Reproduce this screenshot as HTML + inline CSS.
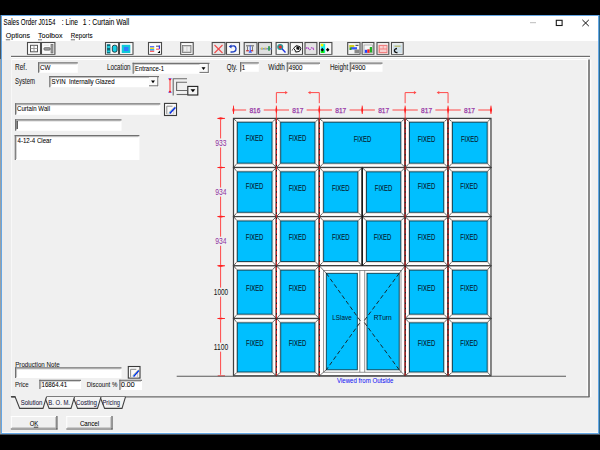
<!DOCTYPE html>
<html><head><meta charset="utf-8"><style>
html,body{margin:0;padding:0;width:600px;height:450px;overflow:hidden;background:#000}
svg{display:block}
text{font-family:"Liberation Sans", sans-serif}
</style></head><body>
<svg width="600" height="450" viewBox="0 0 600 450">
<rect x="0" y="0" width="600" height="450" fill="#000" />
<rect x="0" y="15" width="1" height="419" fill="#9aa0a4" />
<rect x="0" y="15" width="1" height="44" fill="#4a565e" />
<rect x="1" y="15" width="598" height="419" fill="#64a6e4" />
<rect x="0" y="434" width="600" height="1" fill="#4c5660" />
<rect x="599" y="15" width="1" height="419" fill="#2d6b8f" />
<rect x="2" y="16" width="596" height="417" fill="#f0f0f0" />
<rect x="2" y="16" width="596" height="25" fill="#fff" />
<rect x="2" y="432" width="596" height="1" fill="#fbfbf8" />
<text x="3.5" y="24.5" font-size="8.2" fill="#000" textLength="52" lengthAdjust="spacingAndGlyphs" stroke="#000" stroke-width="0.06" >Sales Order J0154</text>
<text x="61.8" y="24.5" font-size="8.2" fill="#000" textLength="16.2" lengthAdjust="spacingAndGlyphs" stroke="#000" stroke-width="0.06" >: Line</text>
<text x="82.8" y="24.5" font-size="8.2" fill="#000" textLength="46.6" lengthAdjust="spacingAndGlyphs" stroke="#000" stroke-width="0.06" >1 : Curtain Wall</text>
<line x1="530" y1="22.7" x2="536" y2="22.7" stroke="#b4b4b4" stroke-width="0.9" />
<rect x="556.3" y="20.3" width="5.8" height="5.2" fill="none" stroke="#1a1a1a" stroke-width="1.1" />
<line x1="582.4" y1="19.9" x2="588.8" y2="26.1" stroke="#111" stroke-width="1.0" />
<line x1="588.8" y1="19.9" x2="582.4" y2="26.1" stroke="#111" stroke-width="1.0" />
<text x="5.8" y="38.3" font-size="7.5" fill="#000" textLength="24.2" lengthAdjust="spacingAndGlyphs" stroke="#000" stroke-width="0.06" >Options</text>
<text x="38" y="38.3" font-size="7.5" fill="#000" textLength="24.5" lengthAdjust="spacingAndGlyphs" stroke="#000" stroke-width="0.06" >Toolbox</text>
<text x="70.8" y="38.3" font-size="7.5" fill="#000" textLength="21.7" lengthAdjust="spacingAndGlyphs" stroke="#000" stroke-width="0.06" >Reports</text>
<line x1="5.8" y1="39.8" x2="10.2" y2="39.8" stroke="#333" stroke-width="0.7" />
<line x1="38" y1="39.8" x2="42" y2="39.8" stroke="#333" stroke-width="0.7" />
<line x1="70.8" y1="39.8" x2="75" y2="39.8" stroke="#333" stroke-width="0.7" />
<rect x="27.5" y="42.5" width="13" height="12" fill="#fbfbfb" stroke="#4a4a4a" stroke-width="1.1" />
<rect x="41.5" y="42.5" width="13.399999999999999" height="12" fill="#fbfbfb" stroke="#4a4a4a" stroke-width="1.1" />
<rect x="105.5" y="42.5" width="13" height="12" fill="#fbfbfb" stroke="#4a4a4a" stroke-width="1.1" />
<rect x="119.5" y="42.5" width="13.5" height="12" fill="#fbfbfb" stroke="#4a4a4a" stroke-width="1.1" />
<rect x="148.5" y="42.5" width="13" height="12" fill="#fbfbfb" stroke="#4a4a4a" stroke-width="1.1" />
<rect x="180.7" y="42.5" width="12.5" height="12" fill="#fbfbfb" stroke="#4a4a4a" stroke-width="1.1" />
<rect x="212.2" y="42.5" width="12.800000000000011" height="12" fill="#e8e8e8" stroke="#4a4a4a" stroke-width="1.1" />
<rect x="226.5" y="42.5" width="13" height="12" fill="#f8f8f8" stroke="#4a4a4a" stroke-width="1.1" />
<rect x="244.2" y="42.5" width="12.800000000000011" height="12" fill="#e8e8e8" stroke="#4a4a4a" stroke-width="1.1" />
<rect x="258.5" y="42.5" width="13" height="12" fill="#e0e0e0" stroke="#4a4a4a" stroke-width="1.1" />
<rect x="276.1" y="42.5" width="12.199999999999989" height="12" fill="#f8f8f8" stroke="#4a4a4a" stroke-width="1.1" />
<rect x="290.2" y="42.5" width="12.300000000000011" height="12" fill="#f8f8f8" stroke="#4a4a4a" stroke-width="1.1" />
<rect x="305.0" y="42.5" width="11.899999999999977" height="12" fill="#e4e4e4" stroke="#4a4a4a" stroke-width="1.1" />
<rect x="319.5" y="42.5" width="12.399999999999977" height="12" fill="#f8f8f8" stroke="#4a4a4a" stroke-width="1.1" />
<rect x="347.7" y="42.5" width="12.300000000000011" height="12" fill="#f4f4f4" stroke="#4a4a4a" stroke-width="1.1" />
<rect x="362.1" y="42.5" width="11.799999999999955" height="12" fill="#f4f4f4" stroke="#4a4a4a" stroke-width="1.1" />
<rect x="377.0" y="42.5" width="11.800000000000011" height="12" fill="#f4f4f4" stroke="#4a4a4a" stroke-width="1.1" />
<rect x="391.5" y="42.5" width="11.699999999999989" height="12" fill="#f4f4f4" stroke="#4a4a4a" stroke-width="1.1" />
<rect x="30.5" y="45.3" width="7" height="6.5" fill="none" stroke="#555" stroke-width="1" />
<line x1="34" y1="45.3" x2="34" y2="51.8" stroke="#888" stroke-width="0.8" />
<line x1="30.5" y1="48.5" x2="37.5" y2="48.5" stroke="#888" stroke-width="0.8" />
<rect x="43.8" y="47.6" width="6.5" height="2.6" fill="#9a9a9a" stroke="#555" stroke-width="0.6" rx="1.2"/>
<rect x="51" y="44.5" width="2" height="8.5" fill="#a8a8a8" stroke="#555" stroke-width="0.6" />
<line x1="43.5" y1="45.2" x2="49" y2="45.2" stroke="#ccc" stroke-width="0.6" />
<rect x="106.8" y="44.2" width="3.6" height="9.3" fill="#0a6a7a" />
<rect x="107.3" y="46" width="2.6" height="2" fill="#20d0e0" />
<rect x="107.3" y="50.5" width="2.6" height="1.6" fill="#20d0e0" />
<rect x="112.3" y="45.2" width="4.8" height="7" fill="#18d0e8" stroke="#000" stroke-width="0.7" rx="2"/>
<rect x="121.7" y="44.8" width="8.6" height="8.2" fill="#10c8d8" />
<rect x="124" y="47" width="4.5" height="4" fill="#2e7cff" />
<rect x="150" y="46.2" width="4.2" height="1.3" fill="#3050ff" />
<rect x="150" y="47.6" width="4.2" height="1.4" fill="#f0e020" />
<rect x="150" y="49.1" width="4.2" height="1.5" fill="#20a0ff" />
<rect x="150" y="50.7" width="4.2" height="1.2" fill="#ff5050" />
<rect x="156" y="45.5" width="3.8" height="1.5" fill="#888" />
<rect x="158.8" y="45.5" width="1.2" height="3.5" fill="#3030ff" />
<rect x="156" y="48.6" width="3.5" height="1.2" fill="#ff6060" />
<polygon points="157.5,53 160,50.5 160,53" fill="#000" />
<rect x="182.5" y="45.5" width="8.5" height="7" fill="#c8c8c8" stroke="#777" stroke-width="0.8" />
<rect x="184" y="46.8" width="2.5" height="4.5" fill="#eee" />
<rect x="187.4" y="46.8" width="2.5" height="4.5" fill="#eee" />
<line x1="214.5" y1="45" x2="222.5" y2="53" stroke="#f04848" stroke-width="1.1" />
<line x1="222.5" y1="45" x2="214.5" y2="53" stroke="#f04848" stroke-width="1.1" />
<path d="M230.2,46.5 Q235.5,44.5 236,48.5 Q236.2,52.5 230.5,52" fill="none" stroke="#2040c0" stroke-width="1.4"/>
<polygon points="228.7,46.6 231.5,44.6 231.5,48.4" fill="#2040c0" />
<rect x="246" y="45.2" width="8" height="1.2" fill="#777" />
<rect x="247" y="46.4" width="1" height="4" fill="#777" />
<rect x="252" y="46.4" width="1" height="4" fill="#777" />
<rect x="246.2" y="50" width="2.6" height="1.4" fill="#c04040" />
<rect x="250.6" y="50" width="2.6" height="1.4" fill="#c04040" />
<polygon points="248.5,52.8 250.3,49.5 252,52.8" fill="#4060ff" />
<rect x="249.7" y="45.5" width="1" height="5" fill="#4060ff" />
<rect x="260.5" y="48" width="11" height="1.5" fill="#7090e0" />
<rect x="261" y="47.6" width="2" height="2" fill="#d0c060" />
<rect x="264.5" y="47.6" width="2" height="2" fill="#d0c060" />
<rect x="268" y="46.2" width="2" height="4.5" fill="#40a060" />
<circle cx="280.2" cy="47" r="2.4" fill="#e03030" stroke="#20a0a0" stroke-width="1.3"/>
<line x1="282" y1="48.8" x2="285.5" y2="52.5" stroke="#2030e0" stroke-width="1.4" />
<path d="M293.5,48.2 l2.8,-2.6 l3.6,1 l1,2.2 l-1.5,2.6 l-3,0.6 z" fill="none" stroke="#111" stroke-width="1"/>
<path d="M296.5,46 l3.2,1.4 l-0.6,2.5 l-2.8,-0.6 z" fill="#111"/>
<path d="M295,51 l1.2,1.8 M292.6,49.2 l-0.4,1.4" fill="none" stroke="#333" stroke-width="0.8"/>
<path d="M306,48.8 q1.2,-2.4 2.4,-0.4 q1,2.2 2.4,0.4 q1.2,-2.4 2.4,-0.2 q0.6,1.5 1.4,1" fill="none" stroke="#b040c8" stroke-width="1.2" stroke-dasharray="1.6,0.7"/>
<rect x="320.8" y="43.8" width="4.4" height="9" fill="#10f0f0" />
<rect x="320.8" y="43.8" width="2.6" height="2.6" fill="#f0f000" />
<rect x="320.8" y="50.2" width="3.6" height="2.8" fill="#10f010" />
<polygon points="322.3,47.8 324,49.8 322.3,51.8 320.6,49.8" fill="#000" />
<polygon points="327.7,47.8 329.5,49.8 327.7,51.8 325.9,49.8" fill="#000" />
<rect x="349.3" y="45" width="5" height="2.5" fill="#d0d020" />
<rect x="350.5" y="47.2" width="6.5" height="2.3" fill="#3050ff" />
<rect x="349.5" y="47.5" width="2" height="2.5" fill="#20a020" />
<rect x="354.5" y="49.5" width="4.5" height="3.8" fill="#888" />
<rect x="355.5" y="44.8" width="3" height="1.2" fill="#555" />
<rect x="364" y="45" width="8.5" height="8" fill="#f8f8f8" stroke="#999" stroke-width="0.7" />
<rect x="364.8" y="49.8" width="2.6" height="3" fill="#2040ff" />
<rect x="367.3" y="49.3" width="2.4" height="3.5" fill="#ff2020" />
<rect x="369.8" y="47" width="2.2" height="5.5" fill="#20b020" />
<rect x="378.5" y="44.8" width="9" height="8.5" fill="#f08080" />
<rect x="379.8" y="46" width="3" height="2.5" fill="#f8d0d0" />
<rect x="383.5" y="46" width="3" height="2.5" fill="#f8d0d0" />
<rect x="380" y="49.5" width="6.5" height="2.5" fill="#f8d0d0" />
<rect x="393" y="44.5" width="9" height="8.5" fill="#cfe0ea" />
<rect x="394.5" y="45.5" width="6" height="1.5" fill="#c0c080" />
<path d="M397,48.5 q-3,0.5 -2.5,2.5 q0.5,2 3,1.5" fill="none" stroke="#111" stroke-width="1.3"/>
<line x1="11" y1="55.3" x2="590" y2="55.3" stroke="#ffffff" stroke-width="1" />
<line x1="11" y1="56.3" x2="590" y2="56.3" stroke="#6e6e6e" stroke-width="1.2" />
<line x1="11" y1="57.5" x2="590" y2="57.5" stroke="#ffffff" stroke-width="1" />
<line x1="11.5" y1="59.5" x2="589" y2="59.5" stroke="#ffffff" stroke-width="1" />
<line x1="11.5" y1="59.5" x2="11.5" y2="396.5" stroke="#f8f8f8" stroke-width="1" />
<line x1="587.3" y1="59.5" x2="587.3" y2="397" stroke="#ffffff" stroke-width="1" />
<line x1="590.8" y1="59.5" x2="590.8" y2="397" stroke="#ffffff" stroke-width="1" />
<rect x="2" y="60" width="9" height="372" fill="#ececec" />
<line x1="589" y1="59.5" x2="589" y2="397" stroke="#505050" stroke-width="1.3" />
<line x1="11.5" y1="396.8" x2="589.5" y2="396.8" stroke="#6a6a6a" stroke-width="1.2" />
<text x="15" y="69.7" font-size="8.2" fill="#1a1a1a" textLength="12" lengthAdjust="spacingAndGlyphs" stroke="#1a1a1a" stroke-width="0.06" >Ref.</text>
<rect x="38" y="62.3" width="39.8" height="10.5" fill="#ffffff" />
<line x1="38" y1="62.9" x2="77.8" y2="62.9" stroke="#707070" stroke-width="1.2" />
<line x1="38.6" y1="62.3" x2="38.6" y2="72.8" stroke="#707070" stroke-width="1.2" />
<line x1="39.5" y1="63.9" x2="76.8" y2="63.9" stroke="#a0a0a0" stroke-width="0.6" />
<line x1="39.6" y1="63.8" x2="39.6" y2="71.8" stroke="#a0a0a0" stroke-width="0.6" />
<text x="39.9" y="70.2" font-size="7.5" fill="#000" textLength="10.5" lengthAdjust="spacingAndGlyphs" stroke="#000" stroke-width="0.06" >CW</text>
<text x="107" y="70" font-size="8.2" fill="#1a1a1a" textLength="23.6" lengthAdjust="spacingAndGlyphs" stroke="#1a1a1a" stroke-width="0.06" >Location</text>
<rect x="132.6" y="62.8" width="76.9" height="11.0" fill="#ffffff" />
<line x1="132.6" y1="63.4" x2="209.5" y2="63.4" stroke="#707070" stroke-width="1.2" />
<line x1="133.2" y1="62.8" x2="133.2" y2="73.8" stroke="#707070" stroke-width="1.2" />
<line x1="134.1" y1="64.39999999999999" x2="208.5" y2="64.39999999999999" stroke="#a0a0a0" stroke-width="0.6" />
<line x1="134.2" y1="64.3" x2="134.2" y2="72.8" stroke="#a0a0a0" stroke-width="0.6" />
<rect x="199.5" y="64.0" width="9" height="8.6" fill="#fafafa" />
<line x1="208.3" y1="63.8" x2="208.3" y2="72.8" stroke="#707070" stroke-width="1" />
<line x1="199.5" y1="72.39999999999999" x2="208.5" y2="72.39999999999999" stroke="#707070" stroke-width="1" />
<polygon points="201.5,67.3 205.5,67.3 203.5,69.89999999999999" fill="#000" />
<text x="135" y="70.6" font-size="7.5" fill="#000" textLength="29" lengthAdjust="spacingAndGlyphs" stroke="#000" stroke-width="0.06" >Entrance-1</text>
<text x="15" y="83.7" font-size="8.2" fill="#1a1a1a" textLength="20" lengthAdjust="spacingAndGlyphs" stroke="#1a1a1a" stroke-width="0.06" >System</text>
<rect x="49.2" y="76" width="109.8" height="11.200000000000003" fill="#ffffff" />
<line x1="49.2" y1="76.6" x2="159" y2="76.6" stroke="#707070" stroke-width="1.2" />
<line x1="49.800000000000004" y1="76" x2="49.800000000000004" y2="87.2" stroke="#707070" stroke-width="1.2" />
<line x1="50.7" y1="77.6" x2="158" y2="77.6" stroke="#a0a0a0" stroke-width="0.6" />
<line x1="50.800000000000004" y1="77.5" x2="50.800000000000004" y2="86.2" stroke="#a0a0a0" stroke-width="0.6" />
<rect x="149" y="77.2" width="9" height="8.800000000000002" fill="#fafafa" />
<line x1="157.8" y1="77" x2="157.8" y2="86.2" stroke="#707070" stroke-width="1" />
<line x1="149" y1="85.8" x2="158" y2="85.8" stroke="#707070" stroke-width="1" />
<polygon points="151.0,80.6 155.0,80.6 153.0,83.19999999999999" fill="#000" />
<text x="51.5" y="84" font-size="7.5" fill="#000" textLength="63" lengthAdjust="spacingAndGlyphs" stroke="#000" stroke-width="0.06" >SYIN  Internally Glazed</text>
<text x="226.7" y="69.7" font-size="8.2" fill="#1a1a1a" textLength="10.6" lengthAdjust="spacingAndGlyphs" stroke="#1a1a1a" stroke-width="0.06" >Qty.</text>
<rect x="240" y="62.3" width="18.80000000000001" height="9.5" fill="#ffffff" />
<line x1="240" y1="62.9" x2="258.8" y2="62.9" stroke="#707070" stroke-width="1.2" />
<line x1="240.6" y1="62.3" x2="240.6" y2="71.8" stroke="#707070" stroke-width="1.2" />
<line x1="241.5" y1="63.9" x2="257.8" y2="63.9" stroke="#a0a0a0" stroke-width="0.6" />
<line x1="241.6" y1="63.8" x2="241.6" y2="70.8" stroke="#a0a0a0" stroke-width="0.6" />
<text x="241.8" y="70" font-size="7.5" fill="#000" textLength="3.4" lengthAdjust="spacingAndGlyphs" stroke="#000" stroke-width="0.06" >1</text>
<text x="268.3" y="69.7" font-size="8.2" fill="#1a1a1a" textLength="16.7" lengthAdjust="spacingAndGlyphs" stroke="#1a1a1a" stroke-width="0.06" >Width</text>
<rect x="286.7" y="62.5" width="33.30000000000001" height="9.299999999999997" fill="#ffffff" />
<line x1="286.7" y1="63.1" x2="320" y2="63.1" stroke="#707070" stroke-width="1.2" />
<line x1="287.3" y1="62.5" x2="287.3" y2="71.8" stroke="#707070" stroke-width="1.2" />
<line x1="288.2" y1="64.1" x2="319" y2="64.1" stroke="#a0a0a0" stroke-width="0.6" />
<line x1="288.3" y1="64.0" x2="288.3" y2="70.8" stroke="#a0a0a0" stroke-width="0.6" />
<text x="288.7" y="70" font-size="7.5" fill="#000" textLength="13.8" lengthAdjust="spacingAndGlyphs" stroke="#000" stroke-width="0.06" >4900</text>
<text x="330" y="69.7" font-size="8.2" fill="#1a1a1a" textLength="18.3" lengthAdjust="spacingAndGlyphs" stroke="#1a1a1a" stroke-width="0.06" >Height</text>
<rect x="349.7" y="62.5" width="32.80000000000001" height="9.299999999999997" fill="#ffffff" />
<line x1="349.7" y1="63.1" x2="382.5" y2="63.1" stroke="#707070" stroke-width="1.2" />
<line x1="350.3" y1="62.5" x2="350.3" y2="71.8" stroke="#707070" stroke-width="1.2" />
<line x1="351.2" y1="64.1" x2="381.5" y2="64.1" stroke="#a0a0a0" stroke-width="0.6" />
<line x1="351.3" y1="64.0" x2="351.3" y2="70.8" stroke="#a0a0a0" stroke-width="0.6" />
<text x="351.5" y="70" font-size="7.5" fill="#000" textLength="14" lengthAdjust="spacingAndGlyphs" stroke="#000" stroke-width="0.06" >4900</text>
<line x1="170" y1="79" x2="170" y2="92" stroke="#ff5050" stroke-width="1.2" />
<line x1="168.3" y1="78.8" x2="171.7" y2="78.8" stroke="#4040ff" stroke-width="0.9" />
<line x1="168.3" y1="92.2" x2="171.7" y2="92.2" stroke="#4040ff" stroke-width="0.9" />
<rect x="169.2" y="78.6" width="1.6" height="1.6" fill="#ff0000" />
<rect x="169.2" y="90.9" width="1.6" height="1.6" fill="#ff0000" />
<polyline points="187,78.8 173.2,78.8 173.2,95.5" fill="none" stroke="#6a6a6a" stroke-width="1.1" />
<polyline points="187,82.2 176.6,82.2 176.6,90.5 187,90.5" fill="none" stroke="#6a6a6a" stroke-width="1.1" />
<line x1="176.6" y1="94.5" x2="187.5" y2="94.5" stroke="#6a6a6a" stroke-width="1.1" />
<rect x="187.8" y="86.4" width="10" height="8.6" fill="#f4f4f4" stroke="#222" stroke-width="1.1" />
<polygon points="190.5,89.2 195.3,89.2 192.9,92.2" fill="#000" />
<rect x="15" y="103.3" width="145.3" height="11.5" fill="#ffffff" />
<line x1="15" y1="103.89999999999999" x2="160.3" y2="103.89999999999999" stroke="#707070" stroke-width="1.2" />
<line x1="15.6" y1="103.3" x2="15.6" y2="114.8" stroke="#707070" stroke-width="1.2" />
<line x1="16.5" y1="104.89999999999999" x2="159.3" y2="104.89999999999999" stroke="#a0a0a0" stroke-width="0.6" />
<line x1="16.6" y1="104.8" x2="16.6" y2="113.8" stroke="#a0a0a0" stroke-width="0.6" />
<text x="17" y="111.3" font-size="7.5" fill="#000" textLength="33" lengthAdjust="spacingAndGlyphs" stroke="#000" stroke-width="0.06" >Curtain Wall</text>
<rect x="164.5" y="103.4" width="12" height="12.099999999999994" fill="#fafafa" stroke="#3a3a3a" stroke-width="1.1" />
<polyline points="166.8,114.10000000000001 166.8,106.2 172.5,106.2" fill="none" stroke="#8c8c8c" stroke-width="1" />
<line x1="173.8" y1="108.9" x2="173.8" y2="114.10000000000001" stroke="#b8b8b8" stroke-width="0.8" />
<line x1="166.8" y1="114.10000000000001" x2="173.8" y2="114.10000000000001" stroke="#c8c8c8" stroke-width="0.8" />
<line x1="168.8" y1="112.5" x2="175" y2="106.5" stroke="#c08070" stroke-width="0.6" />
<line x1="169.4" y1="113.10000000000001" x2="175.2" y2="107.10000000000001" stroke="#10e0f0" stroke-width="1.0" />
<line x1="169.8" y1="113.5" x2="175.4" y2="107.5" stroke="#1020e0" stroke-width="1.3" />
<rect x="15" y="119.3" width="106.5" height="11.500000000000014" fill="#ffffff" />
<line x1="15" y1="119.89999999999999" x2="121.5" y2="119.89999999999999" stroke="#707070" stroke-width="1.2" />
<line x1="15.6" y1="119.3" x2="15.6" y2="130.8" stroke="#707070" stroke-width="1.2" />
<line x1="16.5" y1="120.89999999999999" x2="120.5" y2="120.89999999999999" stroke="#a0a0a0" stroke-width="0.6" />
<line x1="16.6" y1="120.8" x2="16.6" y2="129.8" stroke="#a0a0a0" stroke-width="0.6" />
<line x1="17.2" y1="121" x2="17.2" y2="129" stroke="#000" stroke-width="0.9" />
<rect x="14.7" y="135.1" width="124.7" height="24.900000000000006" fill="#ffffff" />
<line x1="14.7" y1="135.7" x2="139.4" y2="135.7" stroke="#707070" stroke-width="1.2" />
<line x1="15.299999999999999" y1="135.1" x2="15.299999999999999" y2="160" stroke="#707070" stroke-width="1.2" />
<line x1="16.2" y1="136.7" x2="138.4" y2="136.7" stroke="#a0a0a0" stroke-width="0.6" />
<line x1="16.3" y1="136.6" x2="16.3" y2="159" stroke="#a0a0a0" stroke-width="0.6" />
<text x="17.5" y="142.8" font-size="7.5" fill="#000" textLength="34" lengthAdjust="spacingAndGlyphs" stroke="#000" stroke-width="0.06" >4-12-4 Clear</text>
<text x="15.2" y="366.7" font-size="7.5" fill="#1a1a1a" textLength="44.4" lengthAdjust="spacingAndGlyphs" stroke="#1a1a1a" stroke-width="0.06" >Production Note</text>
<rect x="15" y="367.3" width="106.5" height="10.699999999999989" fill="#ffffff" />
<line x1="15" y1="367.90000000000003" x2="121.5" y2="367.90000000000003" stroke="#707070" stroke-width="1.2" />
<line x1="15.6" y1="367.3" x2="15.6" y2="378" stroke="#707070" stroke-width="1.2" />
<line x1="16.5" y1="368.90000000000003" x2="120.5" y2="368.90000000000003" stroke="#a0a0a0" stroke-width="0.6" />
<line x1="16.6" y1="368.8" x2="16.6" y2="377" stroke="#a0a0a0" stroke-width="0.6" />
<rect x="128.3" y="366.5" width="11.700000000000003" height="11.600000000000023" fill="#fafafa" stroke="#3a3a3a" stroke-width="1.1" />
<polyline points="130.6,377.2 130.6,369.3 136.3,369.3" fill="none" stroke="#8c8c8c" stroke-width="1" />
<line x1="137.6" y1="372" x2="137.6" y2="377.2" stroke="#b8b8b8" stroke-width="0.8" />
<line x1="130.6" y1="377.2" x2="137.6" y2="377.2" stroke="#c8c8c8" stroke-width="0.8" />
<line x1="132.6" y1="375.6" x2="138.5" y2="369.6" stroke="#c08070" stroke-width="0.6" />
<line x1="133.2" y1="376.2" x2="138.7" y2="370.2" stroke="#10e0f0" stroke-width="1.0" />
<line x1="133.6" y1="376.6" x2="138.9" y2="370.6" stroke="#1020e0" stroke-width="1.3" />
<text x="15" y="386.5" font-size="7.5" fill="#1a1a1a" textLength="13.7" lengthAdjust="spacingAndGlyphs" stroke="#1a1a1a" stroke-width="0.06" >Price</text>
<rect x="39.3" y="379.7" width="41.7" height="9.300000000000011" fill="#ffffff" />
<line x1="39.3" y1="380.3" x2="81" y2="380.3" stroke="#707070" stroke-width="1.2" />
<line x1="39.9" y1="379.7" x2="39.9" y2="389" stroke="#707070" stroke-width="1.2" />
<line x1="40.8" y1="381.3" x2="80" y2="381.3" stroke="#a0a0a0" stroke-width="0.6" />
<line x1="40.9" y1="381.2" x2="40.9" y2="388" stroke="#a0a0a0" stroke-width="0.6" />
<text x="41.5" y="386.6" font-size="7.5" fill="#000" textLength="25.6" lengthAdjust="spacingAndGlyphs" stroke="#000" stroke-width="0.06" >16864.41</text>
<text x="86.7" y="386.7" font-size="7.5" fill="#1a1a1a" textLength="30.6" lengthAdjust="spacingAndGlyphs" stroke="#1a1a1a" stroke-width="0.06" >Discount %</text>
<rect x="119.3" y="379.7" width="22.700000000000003" height="10.300000000000011" fill="#ffffff" />
<line x1="119.3" y1="380.3" x2="142" y2="380.3" stroke="#707070" stroke-width="1.2" />
<line x1="119.89999999999999" y1="379.7" x2="119.89999999999999" y2="390" stroke="#707070" stroke-width="1.2" />
<line x1="120.8" y1="381.3" x2="141" y2="381.3" stroke="#a0a0a0" stroke-width="0.6" />
<line x1="120.89999999999999" y1="381.2" x2="120.89999999999999" y2="389" stroke="#a0a0a0" stroke-width="0.6" />
<text x="121" y="387" font-size="7.5" fill="#000" textLength="13.7" lengthAdjust="spacingAndGlyphs" stroke="#000" stroke-width="0.06" >0.00</text>
<line x1="11" y1="396.8" x2="125.5" y2="396.8" stroke="#404040" stroke-width="1.1" />
<polygon points="100,396.8 104.6,408.4 122.0,408.4 125.5,396.8" fill="#f4f4f4" />
<polyline points="100,396.8 104.6,408.4 122.0,408.4 125.5,396.8" fill="none" stroke="#404040" stroke-width="1.1" />
<text x="102.5" y="405.4" font-size="7.5" fill="#202040" textLength="17.5" lengthAdjust="spacingAndGlyphs" stroke="#202040" stroke-width="0.06" >Pricing</text>
<polygon points="73,396.8 77.6,408.4 97.5,408.4 101,396.8" fill="#f4f4f4" />
<polyline points="73,396.8 77.6,408.4 97.5,408.4 101,396.8" fill="none" stroke="#404040" stroke-width="1.1" />
<text x="76" y="405.4" font-size="7.5" fill="#202040" textLength="21" lengthAdjust="spacingAndGlyphs" stroke="#202040" stroke-width="0.06" >Costing</text>
<polygon points="44.5,396.8 49.1,408.4 71.0,408.4 74.5,396.8" fill="#f4f4f4" />
<polyline points="44.5,396.8 49.1,408.4 71.0,408.4 74.5,396.8" fill="none" stroke="#404040" stroke-width="1.1" />
<text x="48.3" y="405.4" font-size="7.5" fill="#202040" textLength="21.7" lengthAdjust="spacingAndGlyphs" stroke="#202040" stroke-width="0.06" >B. O. M.</text>
<polygon points="15.1,396.1 19.7,408.4 43,408.4 46.5,396.1" fill="#f0f0f0" />
<polyline points="10.9,396.8 15.1,396.8 19.7,408.4 43,408.4 46.5,396.8" fill="none" stroke="#404040" stroke-width="1.1" />
<text x="20.7" y="405.3" font-size="7.5" fill="#202040" textLength="21.7" lengthAdjust="spacingAndGlyphs" stroke="#202040" stroke-width="0.06" >Solution</text>
<rect x="10.8" y="416" width="46.7" height="13.600000000000023" fill="#f0f0f0" />
<line x1="10.8" y1="416.5" x2="57.5" y2="416.5" stroke="#ffffff" stroke-width="1" />
<line x1="11.3" y1="416" x2="11.3" y2="429.6" stroke="#ffffff" stroke-width="1" />
<line x1="10.8" y1="429.0" x2="57.5" y2="429.0" stroke="#555" stroke-width="1.2" />
<line x1="56.9" y1="416" x2="56.9" y2="429.6" stroke="#555" stroke-width="1.2" />
<line x1="11.8" y1="427.8" x2="56.0" y2="427.8" stroke="#b0b0b0" stroke-width="0.8" />
<line x1="55.7" y1="417" x2="55.7" y2="428.1" stroke="#b0b0b0" stroke-width="0.8" />
<text x="29.7" y="425.5" font-size="7.5" fill="#000" textLength="8.6" lengthAdjust="spacingAndGlyphs" stroke="#000" stroke-width="0.06" >OK</text>
<line x1="33.8" y1="427.2" x2="38.3" y2="427.2" stroke="#000" stroke-width="0.7" />
<rect x="66.3" y="416" width="46.3" height="13.600000000000023" fill="#f0f0f0" />
<line x1="66.3" y1="416.5" x2="112.6" y2="416.5" stroke="#ffffff" stroke-width="1" />
<line x1="66.8" y1="416" x2="66.8" y2="429.6" stroke="#ffffff" stroke-width="1" />
<line x1="66.3" y1="429.0" x2="112.6" y2="429.0" stroke="#555" stroke-width="1.2" />
<line x1="112.0" y1="416" x2="112.0" y2="429.6" stroke="#555" stroke-width="1.2" />
<line x1="67.3" y1="427.8" x2="111.1" y2="427.8" stroke="#b0b0b0" stroke-width="0.8" />
<line x1="110.8" y1="417" x2="110.8" y2="428.1" stroke="#b0b0b0" stroke-width="0.8" />
<text x="79.9" y="425.5" font-size="7.5" fill="#000" textLength="19.3" lengthAdjust="spacingAndGlyphs" stroke="#000" stroke-width="0.06" >Cancel</text>
<rect x="233.5" y="118.4" width="42.870000000000005" height="49.099999999999994" fill="#ffffff" />
<line x1="233.5" y1="118.4" x2="237.3" y2="122.2" stroke="#3a3a3a" stroke-width="0.8" />
<line x1="276.37" y1="118.4" x2="272.02" y2="122.2" stroke="#3a3a3a" stroke-width="0.8" />
<line x1="233.5" y1="167.5" x2="237.3" y2="163.15" stroke="#3a3a3a" stroke-width="0.8" />
<line x1="276.37" y1="167.5" x2="272.02" y2="163.15" stroke="#3a3a3a" stroke-width="0.8" />
<rect x="236.3" y="121.2" width="36.71999999999997" height="42.95" fill="none" stroke="#d8c8c0" stroke-width="0.6" />
<rect x="237.3" y="122.2" width="34.71999999999997" height="40.95" fill="#00bfff" stroke="#0a3a4a" stroke-width="0.9" />
<rect x="233.5" y="118.4" width="42.870000000000005" height="49.099999999999994" fill="none" stroke="#404040" stroke-width="1.25" />
<text x="245.8" y="141.1" font-size="8.6" fill="#062030" textLength="17.6" lengthAdjust="spacingAndGlyphs" stroke="#062030" stroke-width="0.1">FIXED</text>
<rect x="276.37" y="118.4" width="42.920000000000016" height="49.099999999999994" fill="#ffffff" />
<line x1="276.37" y1="118.4" x2="280.72" y2="122.2" stroke="#3a3a3a" stroke-width="0.8" />
<line x1="319.29" y1="118.4" x2="314.94" y2="122.2" stroke="#3a3a3a" stroke-width="0.8" />
<line x1="276.37" y1="167.5" x2="280.72" y2="163.15" stroke="#3a3a3a" stroke-width="0.8" />
<line x1="319.29" y1="167.5" x2="314.94" y2="163.15" stroke="#3a3a3a" stroke-width="0.8" />
<rect x="279.72" y="121.2" width="36.21999999999997" height="42.95" fill="none" stroke="#d8c8c0" stroke-width="0.6" />
<rect x="280.72" y="122.2" width="34.21999999999997" height="40.95" fill="#00bfff" stroke="#0a3a4a" stroke-width="0.9" />
<rect x="276.37" y="118.4" width="42.920000000000016" height="49.099999999999994" fill="none" stroke="#404040" stroke-width="1.25" />
<text x="288.7" y="141.1" font-size="8.6" fill="#062030" textLength="17.6" lengthAdjust="spacingAndGlyphs" stroke="#062030" stroke-width="0.1">FIXED</text>
<rect x="319.29" y="118.4" width="85.83999999999997" height="49.099999999999994" fill="#ffffff" />
<line x1="319.29" y1="118.4" x2="323.64000000000004" y2="122.2" stroke="#3a3a3a" stroke-width="0.8" />
<line x1="405.13" y1="118.4" x2="400.78" y2="122.2" stroke="#3a3a3a" stroke-width="0.8" />
<line x1="319.29" y1="167.5" x2="323.64000000000004" y2="163.15" stroke="#3a3a3a" stroke-width="0.8" />
<line x1="405.13" y1="167.5" x2="400.78" y2="163.15" stroke="#3a3a3a" stroke-width="0.8" />
<rect x="322.64000000000004" y="121.2" width="79.13999999999993" height="42.95" fill="none" stroke="#d8c8c0" stroke-width="0.6" />
<rect x="323.64000000000004" y="122.2" width="77.13999999999993" height="40.95" fill="#00bfff" stroke="#0a3a4a" stroke-width="0.9" />
<rect x="319.29" y="118.4" width="85.83999999999997" height="49.099999999999994" fill="none" stroke="#404040" stroke-width="1.25" />
<text x="353.7" y="141.89999999999998" font-size="8.6" fill="#062030" textLength="17.6" lengthAdjust="spacingAndGlyphs" stroke="#062030" stroke-width="0.1">FIXED</text>
<rect x="405.13" y="118.4" width="42.920000000000016" height="49.099999999999994" fill="#ffffff" />
<line x1="405.13" y1="118.4" x2="409.48" y2="122.2" stroke="#3a3a3a" stroke-width="0.8" />
<line x1="448.05" y1="118.4" x2="443.7" y2="122.2" stroke="#3a3a3a" stroke-width="0.8" />
<line x1="405.13" y1="167.5" x2="409.48" y2="163.15" stroke="#3a3a3a" stroke-width="0.8" />
<line x1="448.05" y1="167.5" x2="443.7" y2="163.15" stroke="#3a3a3a" stroke-width="0.8" />
<rect x="408.48" y="121.2" width="36.21999999999997" height="42.95" fill="none" stroke="#d8c8c0" stroke-width="0.6" />
<rect x="409.48" y="122.2" width="34.21999999999997" height="40.95" fill="#00bfff" stroke="#0a3a4a" stroke-width="0.9" />
<rect x="405.13" y="118.4" width="42.920000000000016" height="49.099999999999994" fill="none" stroke="#404040" stroke-width="1.25" />
<text x="417.7" y="141.89999999999998" font-size="8.6" fill="#062030" textLength="17.6" lengthAdjust="spacingAndGlyphs" stroke="#062030" stroke-width="0.1">FIXED</text>
<rect x="448.05" y="118.4" width="42.920000000000016" height="49.099999999999994" fill="#ffffff" />
<line x1="448.05" y1="118.4" x2="452.40000000000003" y2="122.2" stroke="#3a3a3a" stroke-width="0.8" />
<line x1="490.97" y1="118.4" x2="487.17" y2="122.2" stroke="#3a3a3a" stroke-width="0.8" />
<line x1="448.05" y1="167.5" x2="452.40000000000003" y2="163.15" stroke="#3a3a3a" stroke-width="0.8" />
<line x1="490.97" y1="167.5" x2="487.17" y2="163.15" stroke="#3a3a3a" stroke-width="0.8" />
<rect x="451.40000000000003" y="121.2" width="36.76999999999998" height="42.95" fill="none" stroke="#d8c8c0" stroke-width="0.6" />
<rect x="452.40000000000003" y="122.2" width="34.76999999999998" height="40.95" fill="#00bfff" stroke="#0a3a4a" stroke-width="0.9" />
<rect x="448.05" y="118.4" width="42.920000000000016" height="49.099999999999994" fill="none" stroke="#404040" stroke-width="1.25" />
<text x="460.9" y="141.89999999999998" font-size="8.6" fill="#062030" textLength="17.6" lengthAdjust="spacingAndGlyphs" stroke="#062030" stroke-width="0.1">FIXED</text>
<rect x="233.5" y="167.5" width="42.870000000000005" height="49.099999999999994" fill="#ffffff" />
<line x1="233.5" y1="167.5" x2="237.3" y2="171.85" stroke="#3a3a3a" stroke-width="0.8" />
<line x1="276.37" y1="167.5" x2="272.02" y2="171.85" stroke="#3a3a3a" stroke-width="0.8" />
<line x1="233.5" y1="216.6" x2="237.3" y2="212.25" stroke="#3a3a3a" stroke-width="0.8" />
<line x1="276.37" y1="216.6" x2="272.02" y2="212.25" stroke="#3a3a3a" stroke-width="0.8" />
<rect x="236.3" y="170.85" width="36.71999999999997" height="42.400000000000006" fill="none" stroke="#d8c8c0" stroke-width="0.6" />
<rect x="237.3" y="171.85" width="34.71999999999997" height="40.400000000000006" fill="#00bfff" stroke="#0a3a4a" stroke-width="0.9" />
<rect x="233.5" y="167.5" width="42.870000000000005" height="49.099999999999994" fill="none" stroke="#404040" stroke-width="1.25" />
<text x="245.8" y="189.2" font-size="8.6" fill="#062030" textLength="17.6" lengthAdjust="spacingAndGlyphs" stroke="#062030" stroke-width="0.1">FIXED</text>
<rect x="276.37" y="167.5" width="42.920000000000016" height="49.099999999999994" fill="#ffffff" />
<line x1="276.37" y1="167.5" x2="280.72" y2="171.85" stroke="#3a3a3a" stroke-width="0.8" />
<line x1="319.29" y1="167.5" x2="314.94" y2="171.85" stroke="#3a3a3a" stroke-width="0.8" />
<line x1="276.37" y1="216.6" x2="280.72" y2="212.25" stroke="#3a3a3a" stroke-width="0.8" />
<line x1="319.29" y1="216.6" x2="314.94" y2="212.25" stroke="#3a3a3a" stroke-width="0.8" />
<rect x="279.72" y="170.85" width="36.21999999999997" height="42.400000000000006" fill="none" stroke="#d8c8c0" stroke-width="0.6" />
<rect x="280.72" y="171.85" width="34.21999999999997" height="40.400000000000006" fill="#00bfff" stroke="#0a3a4a" stroke-width="0.9" />
<rect x="276.37" y="167.5" width="42.920000000000016" height="49.099999999999994" fill="none" stroke="#404040" stroke-width="1.25" />
<text x="288.7" y="191.1" font-size="8.6" fill="#062030" textLength="17.6" lengthAdjust="spacingAndGlyphs" stroke="#062030" stroke-width="0.1">FIXED</text>
<rect x="319.29" y="167.5" width="42.91999999999996" height="49.099999999999994" fill="#ffffff" />
<line x1="319.29" y1="167.5" x2="323.64000000000004" y2="171.85" stroke="#3a3a3a" stroke-width="0.8" />
<line x1="362.21" y1="167.5" x2="357.85999999999996" y2="171.85" stroke="#3a3a3a" stroke-width="0.8" />
<line x1="319.29" y1="216.6" x2="323.64000000000004" y2="212.25" stroke="#3a3a3a" stroke-width="0.8" />
<line x1="362.21" y1="216.6" x2="357.85999999999996" y2="212.25" stroke="#3a3a3a" stroke-width="0.8" />
<rect x="322.64000000000004" y="170.85" width="36.219999999999914" height="42.400000000000006" fill="none" stroke="#d8c8c0" stroke-width="0.6" />
<rect x="323.64000000000004" y="171.85" width="34.219999999999914" height="40.400000000000006" fill="#00bfff" stroke="#0a3a4a" stroke-width="0.9" />
<rect x="319.29" y="167.5" width="42.91999999999996" height="49.099999999999994" fill="none" stroke="#404040" stroke-width="1.25" />
<text x="331.9" y="191.1" font-size="8.6" fill="#062030" textLength="17.6" lengthAdjust="spacingAndGlyphs" stroke="#062030" stroke-width="0.1">FIXED</text>
<rect x="362.21" y="167.5" width="42.920000000000016" height="49.099999999999994" fill="#ffffff" />
<line x1="362.21" y1="167.5" x2="366.56" y2="171.85" stroke="#3a3a3a" stroke-width="0.8" />
<line x1="405.13" y1="167.5" x2="400.78" y2="171.85" stroke="#3a3a3a" stroke-width="0.8" />
<line x1="362.21" y1="216.6" x2="366.56" y2="212.25" stroke="#3a3a3a" stroke-width="0.8" />
<line x1="405.13" y1="216.6" x2="400.78" y2="212.25" stroke="#3a3a3a" stroke-width="0.8" />
<rect x="365.56" y="170.85" width="36.21999999999997" height="42.400000000000006" fill="none" stroke="#d8c8c0" stroke-width="0.6" />
<rect x="366.56" y="171.85" width="34.21999999999997" height="40.400000000000006" fill="#00bfff" stroke="#0a3a4a" stroke-width="0.9" />
<rect x="362.21" y="167.5" width="42.920000000000016" height="49.099999999999994" fill="none" stroke="#404040" stroke-width="1.25" />
<text x="374.75" y="191.1" font-size="8.6" fill="#062030" textLength="17.6" lengthAdjust="spacingAndGlyphs" stroke="#062030" stroke-width="0.1">FIXED</text>
<rect x="405.13" y="167.5" width="42.920000000000016" height="49.099999999999994" fill="#ffffff" />
<line x1="405.13" y1="167.5" x2="409.48" y2="171.85" stroke="#3a3a3a" stroke-width="0.8" />
<line x1="448.05" y1="167.5" x2="443.7" y2="171.85" stroke="#3a3a3a" stroke-width="0.8" />
<line x1="405.13" y1="216.6" x2="409.48" y2="212.25" stroke="#3a3a3a" stroke-width="0.8" />
<line x1="448.05" y1="216.6" x2="443.7" y2="212.25" stroke="#3a3a3a" stroke-width="0.8" />
<rect x="408.48" y="170.85" width="36.21999999999997" height="42.400000000000006" fill="none" stroke="#d8c8c0" stroke-width="0.6" />
<rect x="409.48" y="171.85" width="34.21999999999997" height="40.400000000000006" fill="#00bfff" stroke="#0a3a4a" stroke-width="0.9" />
<rect x="405.13" y="167.5" width="42.920000000000016" height="49.099999999999994" fill="none" stroke="#404040" stroke-width="1.25" />
<text x="417.7" y="189.2" font-size="8.6" fill="#062030" textLength="17.6" lengthAdjust="spacingAndGlyphs" stroke="#062030" stroke-width="0.1">FIXED</text>
<rect x="448.05" y="167.5" width="42.920000000000016" height="49.099999999999994" fill="#ffffff" />
<line x1="448.05" y1="167.5" x2="452.40000000000003" y2="171.85" stroke="#3a3a3a" stroke-width="0.8" />
<line x1="490.97" y1="167.5" x2="487.17" y2="171.85" stroke="#3a3a3a" stroke-width="0.8" />
<line x1="448.05" y1="216.6" x2="452.40000000000003" y2="212.25" stroke="#3a3a3a" stroke-width="0.8" />
<line x1="490.97" y1="216.6" x2="487.17" y2="212.25" stroke="#3a3a3a" stroke-width="0.8" />
<rect x="451.40000000000003" y="170.85" width="36.76999999999998" height="42.400000000000006" fill="none" stroke="#d8c8c0" stroke-width="0.6" />
<rect x="452.40000000000003" y="171.85" width="34.76999999999998" height="40.400000000000006" fill="#00bfff" stroke="#0a3a4a" stroke-width="0.9" />
<rect x="448.05" y="167.5" width="42.920000000000016" height="49.099999999999994" fill="none" stroke="#404040" stroke-width="1.25" />
<text x="460.3" y="189.2" font-size="8.6" fill="#062030" textLength="17.6" lengthAdjust="spacingAndGlyphs" stroke="#062030" stroke-width="0.1">FIXED</text>
<rect x="233.5" y="216.6" width="42.870000000000005" height="49.20000000000002" fill="#ffffff" />
<line x1="233.5" y1="216.6" x2="237.3" y2="220.95" stroke="#3a3a3a" stroke-width="0.8" />
<line x1="276.37" y1="216.6" x2="272.02" y2="220.95" stroke="#3a3a3a" stroke-width="0.8" />
<line x1="233.5" y1="265.8" x2="237.3" y2="261.45" stroke="#3a3a3a" stroke-width="0.8" />
<line x1="276.37" y1="265.8" x2="272.02" y2="261.45" stroke="#3a3a3a" stroke-width="0.8" />
<rect x="236.3" y="219.95" width="36.71999999999997" height="42.5" fill="none" stroke="#d8c8c0" stroke-width="0.6" />
<rect x="237.3" y="220.95" width="34.71999999999997" height="40.5" fill="#00bfff" stroke="#0a3a4a" stroke-width="0.9" />
<rect x="233.5" y="216.6" width="42.870000000000005" height="49.20000000000002" fill="none" stroke="#404040" stroke-width="1.25" />
<text x="245.8" y="240.1" font-size="8.6" fill="#062030" textLength="17.6" lengthAdjust="spacingAndGlyphs" stroke="#062030" stroke-width="0.1">FIXED</text>
<rect x="276.37" y="216.6" width="42.920000000000016" height="49.20000000000002" fill="#ffffff" />
<line x1="276.37" y1="216.6" x2="280.72" y2="220.95" stroke="#3a3a3a" stroke-width="0.8" />
<line x1="319.29" y1="216.6" x2="314.94" y2="220.95" stroke="#3a3a3a" stroke-width="0.8" />
<line x1="276.37" y1="265.8" x2="280.72" y2="261.45" stroke="#3a3a3a" stroke-width="0.8" />
<line x1="319.29" y1="265.8" x2="314.94" y2="261.45" stroke="#3a3a3a" stroke-width="0.8" />
<rect x="279.72" y="219.95" width="36.21999999999997" height="42.5" fill="none" stroke="#d8c8c0" stroke-width="0.6" />
<rect x="280.72" y="220.95" width="34.21999999999997" height="40.5" fill="#00bfff" stroke="#0a3a4a" stroke-width="0.9" />
<rect x="276.37" y="216.6" width="42.920000000000016" height="49.20000000000002" fill="none" stroke="#404040" stroke-width="1.25" />
<text x="288.7" y="240.1" font-size="8.6" fill="#062030" textLength="17.6" lengthAdjust="spacingAndGlyphs" stroke="#062030" stroke-width="0.1">FIXED</text>
<rect x="319.29" y="216.6" width="42.91999999999996" height="49.20000000000002" fill="#ffffff" />
<line x1="319.29" y1="216.6" x2="323.64000000000004" y2="220.95" stroke="#3a3a3a" stroke-width="0.8" />
<line x1="362.21" y1="216.6" x2="357.85999999999996" y2="220.95" stroke="#3a3a3a" stroke-width="0.8" />
<line x1="319.29" y1="265.8" x2="323.64000000000004" y2="261.45" stroke="#3a3a3a" stroke-width="0.8" />
<line x1="362.21" y1="265.8" x2="357.85999999999996" y2="261.45" stroke="#3a3a3a" stroke-width="0.8" />
<rect x="322.64000000000004" y="219.95" width="36.219999999999914" height="42.5" fill="none" stroke="#d8c8c0" stroke-width="0.6" />
<rect x="323.64000000000004" y="220.95" width="34.219999999999914" height="40.5" fill="#00bfff" stroke="#0a3a4a" stroke-width="0.9" />
<rect x="319.29" y="216.6" width="42.91999999999996" height="49.20000000000002" fill="none" stroke="#404040" stroke-width="1.25" />
<text x="331.9" y="240.1" font-size="8.6" fill="#062030" textLength="17.6" lengthAdjust="spacingAndGlyphs" stroke="#062030" stroke-width="0.1">FIXED</text>
<rect x="362.21" y="216.6" width="42.920000000000016" height="49.20000000000002" fill="#ffffff" />
<line x1="362.21" y1="216.6" x2="366.56" y2="220.95" stroke="#3a3a3a" stroke-width="0.8" />
<line x1="405.13" y1="216.6" x2="400.78" y2="220.95" stroke="#3a3a3a" stroke-width="0.8" />
<line x1="362.21" y1="265.8" x2="366.56" y2="261.45" stroke="#3a3a3a" stroke-width="0.8" />
<line x1="405.13" y1="265.8" x2="400.78" y2="261.45" stroke="#3a3a3a" stroke-width="0.8" />
<rect x="365.56" y="219.95" width="36.21999999999997" height="42.5" fill="none" stroke="#d8c8c0" stroke-width="0.6" />
<rect x="366.56" y="220.95" width="34.21999999999997" height="40.5" fill="#00bfff" stroke="#0a3a4a" stroke-width="0.9" />
<rect x="362.21" y="216.6" width="42.920000000000016" height="49.20000000000002" fill="none" stroke="#404040" stroke-width="1.25" />
<text x="373.7" y="240.1" font-size="8.6" fill="#062030" textLength="17.6" lengthAdjust="spacingAndGlyphs" stroke="#062030" stroke-width="0.1">FIXED</text>
<rect x="405.13" y="216.6" width="42.920000000000016" height="49.20000000000002" fill="#ffffff" />
<line x1="405.13" y1="216.6" x2="409.48" y2="220.95" stroke="#3a3a3a" stroke-width="0.8" />
<line x1="448.05" y1="216.6" x2="443.7" y2="220.95" stroke="#3a3a3a" stroke-width="0.8" />
<line x1="405.13" y1="265.8" x2="409.48" y2="261.45" stroke="#3a3a3a" stroke-width="0.8" />
<line x1="448.05" y1="265.8" x2="443.7" y2="261.45" stroke="#3a3a3a" stroke-width="0.8" />
<rect x="408.48" y="219.95" width="36.21999999999997" height="42.5" fill="none" stroke="#d8c8c0" stroke-width="0.6" />
<rect x="409.48" y="220.95" width="34.21999999999997" height="40.5" fill="#00bfff" stroke="#0a3a4a" stroke-width="0.9" />
<rect x="405.13" y="216.6" width="42.920000000000016" height="49.20000000000002" fill="none" stroke="#404040" stroke-width="1.25" />
<text x="417.7" y="240.1" font-size="8.6" fill="#062030" textLength="17.6" lengthAdjust="spacingAndGlyphs" stroke="#062030" stroke-width="0.1">FIXED</text>
<rect x="448.05" y="216.6" width="42.920000000000016" height="49.20000000000002" fill="#ffffff" />
<line x1="448.05" y1="216.6" x2="452.40000000000003" y2="220.95" stroke="#3a3a3a" stroke-width="0.8" />
<line x1="490.97" y1="216.6" x2="487.17" y2="220.95" stroke="#3a3a3a" stroke-width="0.8" />
<line x1="448.05" y1="265.8" x2="452.40000000000003" y2="261.45" stroke="#3a3a3a" stroke-width="0.8" />
<line x1="490.97" y1="265.8" x2="487.17" y2="261.45" stroke="#3a3a3a" stroke-width="0.8" />
<rect x="451.40000000000003" y="219.95" width="36.76999999999998" height="42.5" fill="none" stroke="#d8c8c0" stroke-width="0.6" />
<rect x="452.40000000000003" y="220.95" width="34.76999999999998" height="40.5" fill="#00bfff" stroke="#0a3a4a" stroke-width="0.9" />
<rect x="448.05" y="216.6" width="42.920000000000016" height="49.20000000000002" fill="none" stroke="#404040" stroke-width="1.25" />
<text x="460.3" y="240.1" font-size="8.6" fill="#062030" textLength="17.6" lengthAdjust="spacingAndGlyphs" stroke="#062030" stroke-width="0.1">FIXED</text>
<rect x="233.5" y="265.8" width="42.870000000000005" height="52.69999999999999" fill="#ffffff" />
<line x1="233.5" y1="265.8" x2="237.3" y2="270.15000000000003" stroke="#3a3a3a" stroke-width="0.8" />
<line x1="276.37" y1="265.8" x2="272.02" y2="270.15000000000003" stroke="#3a3a3a" stroke-width="0.8" />
<line x1="233.5" y1="318.5" x2="237.3" y2="314.15" stroke="#3a3a3a" stroke-width="0.8" />
<line x1="276.37" y1="318.5" x2="272.02" y2="314.15" stroke="#3a3a3a" stroke-width="0.8" />
<rect x="236.3" y="269.15000000000003" width="36.71999999999997" height="45.99999999999994" fill="none" stroke="#d8c8c0" stroke-width="0.6" />
<rect x="237.3" y="270.15000000000003" width="34.71999999999997" height="43.99999999999994" fill="#00bfff" stroke="#0a3a4a" stroke-width="0.9" />
<rect x="233.5" y="265.8" width="42.870000000000005" height="52.69999999999999" fill="none" stroke="#404040" stroke-width="1.25" />
<text x="246" y="291.0" font-size="8.6" fill="#062030" textLength="17.6" lengthAdjust="spacingAndGlyphs" stroke="#062030" stroke-width="0.1">FIXED</text>
<rect x="276.37" y="265.8" width="42.920000000000016" height="52.69999999999999" fill="#ffffff" />
<line x1="276.37" y1="265.8" x2="280.72" y2="270.15000000000003" stroke="#3a3a3a" stroke-width="0.8" />
<line x1="319.29" y1="265.8" x2="314.94" y2="270.15000000000003" stroke="#3a3a3a" stroke-width="0.8" />
<line x1="276.37" y1="318.5" x2="280.72" y2="314.15" stroke="#3a3a3a" stroke-width="0.8" />
<line x1="319.29" y1="318.5" x2="314.94" y2="314.15" stroke="#3a3a3a" stroke-width="0.8" />
<rect x="279.72" y="269.15000000000003" width="36.21999999999997" height="45.99999999999994" fill="none" stroke="#d8c8c0" stroke-width="0.6" />
<rect x="280.72" y="270.15000000000003" width="34.21999999999997" height="43.99999999999994" fill="#00bfff" stroke="#0a3a4a" stroke-width="0.9" />
<rect x="276.37" y="265.8" width="42.920000000000016" height="52.69999999999999" fill="none" stroke="#404040" stroke-width="1.25" />
<text x="288.7" y="291.0" font-size="8.6" fill="#062030" textLength="17.6" lengthAdjust="spacingAndGlyphs" stroke="#062030" stroke-width="0.1">FIXED</text>
<rect x="405.13" y="265.8" width="42.920000000000016" height="52.69999999999999" fill="#ffffff" />
<line x1="405.13" y1="265.8" x2="409.48" y2="270.15000000000003" stroke="#3a3a3a" stroke-width="0.8" />
<line x1="448.05" y1="265.8" x2="443.7" y2="270.15000000000003" stroke="#3a3a3a" stroke-width="0.8" />
<line x1="405.13" y1="318.5" x2="409.48" y2="314.15" stroke="#3a3a3a" stroke-width="0.8" />
<line x1="448.05" y1="318.5" x2="443.7" y2="314.15" stroke="#3a3a3a" stroke-width="0.8" />
<rect x="408.48" y="269.15000000000003" width="36.21999999999997" height="45.99999999999994" fill="none" stroke="#d8c8c0" stroke-width="0.6" />
<rect x="409.48" y="270.15000000000003" width="34.21999999999997" height="43.99999999999994" fill="#00bfff" stroke="#0a3a4a" stroke-width="0.9" />
<rect x="405.13" y="265.8" width="42.920000000000016" height="52.69999999999999" fill="none" stroke="#404040" stroke-width="1.25" />
<text x="417.7" y="291.0" font-size="8.6" fill="#062030" textLength="17.6" lengthAdjust="spacingAndGlyphs" stroke="#062030" stroke-width="0.1">FIXED</text>
<rect x="448.05" y="265.8" width="42.920000000000016" height="52.69999999999999" fill="#ffffff" />
<line x1="448.05" y1="265.8" x2="452.40000000000003" y2="270.15000000000003" stroke="#3a3a3a" stroke-width="0.8" />
<line x1="490.97" y1="265.8" x2="487.17" y2="270.15000000000003" stroke="#3a3a3a" stroke-width="0.8" />
<line x1="448.05" y1="318.5" x2="452.40000000000003" y2="314.15" stroke="#3a3a3a" stroke-width="0.8" />
<line x1="490.97" y1="318.5" x2="487.17" y2="314.15" stroke="#3a3a3a" stroke-width="0.8" />
<rect x="451.40000000000003" y="269.15000000000003" width="36.76999999999998" height="45.99999999999994" fill="none" stroke="#d8c8c0" stroke-width="0.6" />
<rect x="452.40000000000003" y="270.15000000000003" width="34.76999999999998" height="43.99999999999994" fill="#00bfff" stroke="#0a3a4a" stroke-width="0.9" />
<rect x="448.05" y="265.8" width="42.920000000000016" height="52.69999999999999" fill="none" stroke="#404040" stroke-width="1.25" />
<text x="460.3" y="291.0" font-size="8.6" fill="#062030" textLength="17.6" lengthAdjust="spacingAndGlyphs" stroke="#062030" stroke-width="0.1">FIXED</text>
<rect x="233.5" y="318.5" width="42.870000000000005" height="57.30000000000001" fill="#ffffff" />
<line x1="233.5" y1="318.5" x2="237.3" y2="322.85" stroke="#3a3a3a" stroke-width="0.8" />
<line x1="276.37" y1="318.5" x2="272.02" y2="322.85" stroke="#3a3a3a" stroke-width="0.8" />
<line x1="233.5" y1="375.8" x2="237.3" y2="372.0" stroke="#3a3a3a" stroke-width="0.8" />
<line x1="276.37" y1="375.8" x2="272.02" y2="372.0" stroke="#3a3a3a" stroke-width="0.8" />
<rect x="236.3" y="321.85" width="36.71999999999997" height="51.14999999999998" fill="none" stroke="#d8c8c0" stroke-width="0.6" />
<rect x="237.3" y="322.85" width="34.71999999999997" height="49.14999999999998" fill="#00bfff" stroke="#0a3a4a" stroke-width="0.9" />
<rect x="233.5" y="318.5" width="42.870000000000005" height="57.30000000000001" fill="none" stroke="#404040" stroke-width="1.25" />
<text x="246" y="346.2" font-size="8.6" fill="#062030" textLength="17.6" lengthAdjust="spacingAndGlyphs" stroke="#062030" stroke-width="0.1">FIXED</text>
<rect x="276.37" y="318.5" width="42.920000000000016" height="57.30000000000001" fill="#ffffff" />
<line x1="276.37" y1="318.5" x2="280.72" y2="322.85" stroke="#3a3a3a" stroke-width="0.8" />
<line x1="319.29" y1="318.5" x2="314.94" y2="322.85" stroke="#3a3a3a" stroke-width="0.8" />
<line x1="276.37" y1="375.8" x2="280.72" y2="372.0" stroke="#3a3a3a" stroke-width="0.8" />
<line x1="319.29" y1="375.8" x2="314.94" y2="372.0" stroke="#3a3a3a" stroke-width="0.8" />
<rect x="279.72" y="321.85" width="36.21999999999997" height="51.14999999999998" fill="none" stroke="#d8c8c0" stroke-width="0.6" />
<rect x="280.72" y="322.85" width="34.21999999999997" height="49.14999999999998" fill="#00bfff" stroke="#0a3a4a" stroke-width="0.9" />
<rect x="276.37" y="318.5" width="42.920000000000016" height="57.30000000000001" fill="none" stroke="#404040" stroke-width="1.25" />
<text x="288.7" y="346.2" font-size="8.6" fill="#062030" textLength="17.6" lengthAdjust="spacingAndGlyphs" stroke="#062030" stroke-width="0.1">FIXED</text>
<rect x="405.13" y="318.5" width="42.920000000000016" height="57.30000000000001" fill="#ffffff" />
<line x1="405.13" y1="318.5" x2="409.48" y2="322.85" stroke="#3a3a3a" stroke-width="0.8" />
<line x1="448.05" y1="318.5" x2="443.7" y2="322.85" stroke="#3a3a3a" stroke-width="0.8" />
<line x1="405.13" y1="375.8" x2="409.48" y2="372.0" stroke="#3a3a3a" stroke-width="0.8" />
<line x1="448.05" y1="375.8" x2="443.7" y2="372.0" stroke="#3a3a3a" stroke-width="0.8" />
<rect x="408.48" y="321.85" width="36.21999999999997" height="51.14999999999998" fill="none" stroke="#d8c8c0" stroke-width="0.6" />
<rect x="409.48" y="322.85" width="34.21999999999997" height="49.14999999999998" fill="#00bfff" stroke="#0a3a4a" stroke-width="0.9" />
<rect x="405.13" y="318.5" width="42.920000000000016" height="57.30000000000001" fill="none" stroke="#404040" stroke-width="1.25" />
<text x="417.7" y="346.2" font-size="8.6" fill="#062030" textLength="17.6" lengthAdjust="spacingAndGlyphs" stroke="#062030" stroke-width="0.1">FIXED</text>
<rect x="448.05" y="318.5" width="42.920000000000016" height="57.30000000000001" fill="#ffffff" />
<line x1="448.05" y1="318.5" x2="452.40000000000003" y2="322.85" stroke="#3a3a3a" stroke-width="0.8" />
<line x1="490.97" y1="318.5" x2="487.17" y2="322.85" stroke="#3a3a3a" stroke-width="0.8" />
<line x1="448.05" y1="375.8" x2="452.40000000000003" y2="372.0" stroke="#3a3a3a" stroke-width="0.8" />
<line x1="490.97" y1="375.8" x2="487.17" y2="372.0" stroke="#3a3a3a" stroke-width="0.8" />
<rect x="451.40000000000003" y="321.85" width="36.76999999999998" height="51.14999999999998" fill="none" stroke="#d8c8c0" stroke-width="0.6" />
<rect x="452.40000000000003" y="322.85" width="34.76999999999998" height="49.14999999999998" fill="#00bfff" stroke="#0a3a4a" stroke-width="0.9" />
<rect x="448.05" y="318.5" width="42.920000000000016" height="57.30000000000001" fill="none" stroke="#404040" stroke-width="1.25" />
<text x="460.3" y="346.2" font-size="8.6" fill="#062030" textLength="17.6" lengthAdjust="spacingAndGlyphs" stroke="#062030" stroke-width="0.1">FIXED</text>
<rect x="319.29" y="265.8" width="85.83999999999997" height="110.0" fill="#ffffff" />
<rect x="323.7" y="270.4" width="77.30000000000001" height="101.80000000000001" fill="none" stroke="#666" stroke-width="0.7" />
<line x1="359.8" y1="270.4" x2="359.8" y2="372.2" stroke="#666" stroke-width="0.7" />
<line x1="364.7" y1="270.4" x2="364.7" y2="372.2" stroke="#666" stroke-width="0.7" />
<line x1="319.29" y1="265.8" x2="326.3" y2="273.3" stroke="#444" stroke-width="0.7" />
<line x1="405.13" y1="265.8" x2="399.2" y2="273.3" stroke="#444" stroke-width="0.7" />
<line x1="319.29" y1="375.8" x2="326.3" y2="369.8" stroke="#444" stroke-width="0.7" />
<line x1="405.13" y1="375.8" x2="399.2" y2="369.8" stroke="#444" stroke-width="0.7" />
<rect x="326.3" y="273.3" width="31.0" height="96.5" fill="#00bfff" stroke="#0a3a4a" stroke-width="0.9" />
<rect x="367" y="273.3" width="32.19999999999999" height="96.5" fill="#00bfff" stroke="#0a3a4a" stroke-width="0.9" />
<rect x="319.29" y="265.8" width="85.83999999999997" height="110.0" fill="none" stroke="#222" stroke-width="1" />
<polyline points="326.3,273.3 360.8,321.5 326.3,369.8" fill="none" stroke="#181818" stroke-width="0.9" stroke-dasharray="4.2,2.6"/>
<polyline points="399.2,273.3 363.6,321.5 399.2,369.8" fill="none" stroke="#181818" stroke-width="0.9" stroke-dasharray="4.2,2.6"/>
<text x="332.3" y="320.4" font-size="7.8" fill="#062030" textLength="19.4" lengthAdjust="spacingAndGlyphs" stroke="#062030" stroke-width="0.06" >LSlave</text>
<text x="373.7" y="320.4" font-size="7.8" fill="#062030" textLength="18" lengthAdjust="spacingAndGlyphs" stroke="#062030" stroke-width="0.06" >RTurn</text>
<line x1="362.21" y1="167.5" x2="362.21" y2="265.8" stroke="#000" stroke-width="1" />
<line x1="276.37" y1="118.4" x2="276.37" y2="375.8" stroke="#111" stroke-width="1" />
<line x1="276.37" y1="118.4" x2="276.37" y2="375.8" stroke="#e82828" stroke-width="1" stroke-dasharray="4,1.3"/>
<line x1="319.29" y1="118.4" x2="319.29" y2="375.8" stroke="#111" stroke-width="1" />
<line x1="319.29" y1="118.4" x2="319.29" y2="375.8" stroke="#e82828" stroke-width="1" stroke-dasharray="4,1.3"/>
<line x1="405.13" y1="118.4" x2="405.13" y2="375.8" stroke="#111" stroke-width="1" />
<line x1="405.13" y1="118.4" x2="405.13" y2="375.8" stroke="#e82828" stroke-width="1" stroke-dasharray="4,1.3"/>
<line x1="448.05" y1="118.4" x2="448.05" y2="375.8" stroke="#111" stroke-width="1" />
<line x1="448.05" y1="118.4" x2="448.05" y2="375.8" stroke="#e82828" stroke-width="1" stroke-dasharray="4,1.3"/>
<line x1="234.5" y1="110" x2="246.135" y2="110" stroke="#ff4848" stroke-width="1" />
<line x1="263.735" y1="110" x2="275.37" y2="110" stroke="#ff4848" stroke-width="1" />
<text x="254.935" y="112.8" font-size="7.4" fill="#9030a0" textLength="11" lengthAdjust="spacingAndGlyphs" text-anchor="middle" stroke="#9a3aa8" stroke-width="0.25">816</text>
<line x1="277.37" y1="110" x2="289.03000000000003" y2="110" stroke="#ff4848" stroke-width="1" />
<line x1="306.63000000000005" y1="110" x2="318.29" y2="110" stroke="#ff4848" stroke-width="1" />
<text x="297.83000000000004" y="112.8" font-size="7.4" fill="#9030a0" textLength="11" lengthAdjust="spacingAndGlyphs" text-anchor="middle" stroke="#9a3aa8" stroke-width="0.25">817</text>
<line x1="320.29" y1="110" x2="331.95" y2="110" stroke="#ff4848" stroke-width="1" />
<line x1="349.55" y1="110" x2="361.21" y2="110" stroke="#ff4848" stroke-width="1" />
<text x="340.75" y="112.8" font-size="7.4" fill="#9030a0" textLength="11" lengthAdjust="spacingAndGlyphs" text-anchor="middle" stroke="#9a3aa8" stroke-width="0.25">817</text>
<line x1="363.21" y1="110" x2="374.86999999999995" y2="110" stroke="#ff4848" stroke-width="1" />
<line x1="392.46999999999997" y1="110" x2="404.13" y2="110" stroke="#ff4848" stroke-width="1" />
<text x="383.66999999999996" y="112.8" font-size="7.4" fill="#9030a0" textLength="11" lengthAdjust="spacingAndGlyphs" text-anchor="middle" stroke="#9a3aa8" stroke-width="0.25">817</text>
<line x1="406.13" y1="110" x2="417.79" y2="110" stroke="#ff4848" stroke-width="1" />
<line x1="435.39000000000004" y1="110" x2="447.05" y2="110" stroke="#ff4848" stroke-width="1" />
<text x="426.59000000000003" y="112.8" font-size="7.4" fill="#9030a0" textLength="11" lengthAdjust="spacingAndGlyphs" text-anchor="middle" stroke="#9a3aa8" stroke-width="0.25">817</text>
<line x1="449.05" y1="110" x2="460.71" y2="110" stroke="#ff4848" stroke-width="1" />
<line x1="478.31" y1="110" x2="489.97" y2="110" stroke="#ff4848" stroke-width="1" />
<text x="469.51" y="112.8" font-size="7.4" fill="#9030a0" textLength="11" lengthAdjust="spacingAndGlyphs" text-anchor="middle" stroke="#9a3aa8" stroke-width="0.25">817</text>
<line x1="233.5" y1="105.6" x2="233.5" y2="114" stroke="#ff4848" stroke-width="1" />
<polygon points="233.5,106 234.6,110 233.5,114 232.4,110" fill="#ff2020" />
<line x1="276.37" y1="105.6" x2="276.37" y2="114" stroke="#ff4848" stroke-width="1" />
<polygon points="276.37,106 277.47,110 276.37,114 275.27,110" fill="#ff2020" />
<line x1="319.29" y1="105.6" x2="319.29" y2="114" stroke="#ff4848" stroke-width="1" />
<polygon points="319.29,106 320.39000000000004,110 319.29,114 318.19,110" fill="#ff2020" />
<line x1="362.21" y1="105.6" x2="362.21" y2="114" stroke="#ff4848" stroke-width="1" />
<polygon points="362.21,106 363.31,110 362.21,114 361.10999999999996,110" fill="#ff2020" />
<line x1="405.13" y1="105.6" x2="405.13" y2="114" stroke="#ff4848" stroke-width="1" />
<polygon points="405.13,106 406.23,110 405.13,114 404.03,110" fill="#ff2020" />
<line x1="448.05" y1="105.6" x2="448.05" y2="114" stroke="#ff4848" stroke-width="1" />
<polygon points="448.05,106 449.15000000000003,110 448.05,114 446.95,110" fill="#ff2020" />
<line x1="490.97" y1="105.6" x2="490.97" y2="114" stroke="#ff4848" stroke-width="1" />
<polygon points="490.97,106 492.07000000000005,110 490.97,114 489.87,110" fill="#ff2020" />
<line x1="276.37" y1="114" x2="276.37" y2="118.4" stroke="#ff4848" stroke-width="1" />
<line x1="319.29" y1="114" x2="319.29" y2="118.4" stroke="#ff4848" stroke-width="1" />
<line x1="405.13" y1="114" x2="405.13" y2="118.4" stroke="#ff4848" stroke-width="1" />
<line x1="448.05" y1="114" x2="448.05" y2="118.4" stroke="#ff4848" stroke-width="1" />
<line x1="276.37" y1="103.2" x2="276.37" y2="92.6" stroke="#ff4848" stroke-width="1" />
<line x1="276.37" y1="92.6" x2="286.27" y2="92.6" stroke="#ff4848" stroke-width="1" />
<polygon points="287.77,92.6 285.16999999999996,90.9 285.16999999999996,94.3" fill="#ff4848" />
<line x1="319.29" y1="103.2" x2="319.29" y2="92.6" stroke="#ff4848" stroke-width="1" />
<line x1="319.29" y1="92.6" x2="309.39000000000004" y2="92.6" stroke="#ff4848" stroke-width="1" />
<polygon points="307.89000000000004,92.6 310.49000000000007,90.9 310.49000000000007,94.3" fill="#ff4848" />
<line x1="405.13" y1="103.2" x2="405.13" y2="92.6" stroke="#ff4848" stroke-width="1" />
<line x1="405.13" y1="92.6" x2="415.03" y2="92.6" stroke="#ff4848" stroke-width="1" />
<polygon points="416.53,92.6 413.92999999999995,90.9 413.92999999999995,94.3" fill="#ff4848" />
<line x1="448.05" y1="103.2" x2="448.05" y2="92.6" stroke="#ff4848" stroke-width="1" />
<line x1="448.05" y1="92.6" x2="438.15000000000003" y2="92.6" stroke="#ff4848" stroke-width="1" />
<polygon points="436.65000000000003,92.6 439.25000000000006,90.9 439.25000000000006,94.3" fill="#ff4848" />
<line x1="220.6" y1="119.4" x2="220.6" y2="138.45" stroke="#ff4848" stroke-width="1" />
<line x1="220.6" y1="147.45" x2="220.6" y2="166.5" stroke="#ff4848" stroke-width="1" />
<text x="221.0" y="145.85" font-size="8.2" fill="#9030a0" textLength="11.3" lengthAdjust="spacingAndGlyphs" text-anchor="middle" stroke="none">933</text>
<line x1="220.6" y1="168.5" x2="220.6" y2="187.55" stroke="#ff4848" stroke-width="1" />
<line x1="220.6" y1="196.55" x2="220.6" y2="215.6" stroke="#ff4848" stroke-width="1" />
<text x="221.0" y="194.95000000000002" font-size="8.2" fill="#9030a0" textLength="11.3" lengthAdjust="spacingAndGlyphs" text-anchor="middle" stroke="none">934</text>
<line x1="220.6" y1="217.6" x2="220.6" y2="236.7" stroke="#ff4848" stroke-width="1" />
<line x1="220.6" y1="245.7" x2="220.6" y2="264.8" stroke="#ff4848" stroke-width="1" />
<text x="221.0" y="244.1" font-size="8.2" fill="#9030a0" textLength="11.3" lengthAdjust="spacingAndGlyphs" text-anchor="middle" stroke="none">934</text>
<line x1="220.6" y1="266.8" x2="220.6" y2="287.65" stroke="#ff4848" stroke-width="1" />
<line x1="220.6" y1="296.65" x2="220.6" y2="317.5" stroke="#ff4848" stroke-width="1" />
<text x="221.0" y="295.04999999999995" font-size="8.2" fill="#111" textLength="14.4" lengthAdjust="spacingAndGlyphs" text-anchor="middle" stroke="none">1000</text>
<line x1="220.6" y1="319.5" x2="220.6" y2="342.65" stroke="#ff4848" stroke-width="1" />
<line x1="220.6" y1="351.65" x2="220.6" y2="374.8" stroke="#ff4848" stroke-width="1" />
<text x="221.0" y="350.04999999999995" font-size="8.2" fill="#111" textLength="14.4" lengthAdjust="spacingAndGlyphs" text-anchor="middle" stroke="none">1100</text>
<line x1="217.7" y1="118.4" x2="225" y2="118.4" stroke="#ff4848" stroke-width="1" />
<polygon points="216.8,118.4 220.6,117.30000000000001 225.2,118.4 220.6,119.5" fill="#ff2020" />
<line x1="217.7" y1="167.5" x2="225" y2="167.5" stroke="#ff4848" stroke-width="1" />
<polygon points="216.8,167.5 220.6,166.4 225.2,167.5 220.6,168.6" fill="#ff2020" />
<line x1="217.7" y1="216.6" x2="225" y2="216.6" stroke="#ff4848" stroke-width="1" />
<polygon points="216.8,216.6 220.6,215.5 225.2,216.6 220.6,217.7" fill="#ff2020" />
<line x1="217.7" y1="265.8" x2="225" y2="265.8" stroke="#ff4848" stroke-width="1" />
<polygon points="216.8,265.8 220.6,264.7 225.2,265.8 220.6,266.90000000000003" fill="#ff2020" />
<line x1="217.7" y1="318.5" x2="225" y2="318.5" stroke="#ff4848" stroke-width="1" />
<polygon points="216.8,318.5 220.6,317.4 225.2,318.5 220.6,319.6" fill="#ff2020" />
<line x1="217.7" y1="375.8" x2="225" y2="375.8" stroke="#ff4848" stroke-width="1" />
<line x1="176.7" y1="376.3" x2="566" y2="376.3" stroke="#5a5a5a" stroke-width="1.1" />
<text x="337" y="382.7" font-size="7" fill="#1414f4" textLength="56.4" lengthAdjust="spacingAndGlyphs" stroke="#1414f4" stroke-width="0.05">Viewed from Outside</text>
</svg></body></html>
